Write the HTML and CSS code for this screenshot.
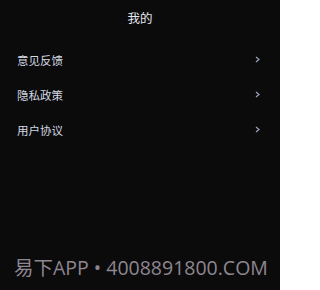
FILE: index.html
```html
<!DOCTYPE html>
<html lang="zh">
<head>
<meta charset="utf-8">
<link rel="stylesheet" href="styles.css">
</head>
<body>
<div class="screen">
  <div class="title">我的</div>
  <div class="menu">
    <div class="item"><span class="label">意见反馈</span><svg class="chev" width="5" height="7" viewBox="0 0 5 7"><path d="M1 1 L4 3.5 L1 6" fill="none" stroke="#9aa4b8" stroke-width="1.2"/></svg></div>
    <div class="item"><span class="label">隐私政策</span><svg class="chev" width="5" height="7" viewBox="0 0 5 7"><path d="M1 1 L4 3.5 L1 6" fill="none" stroke="#9aa4b8" stroke-width="1.2"/></svg></div>
    <div class="item"><span class="label">用户协议</span><svg class="chev" width="5" height="7" viewBox="0 0 5 7"><path d="M1 1 L4 3.5 L1 6" fill="none" stroke="#9aa4b8" stroke-width="1.2"/></svg></div>
  </div>
  <div class="footer">易下APP • 4008891800.COM</div>
</div>
</body>
</html>
```
FILE: styles.css
```css
html, body {
  margin: 0;
  padding: 0;
  background: #ffffff;
}
.screen {
  width: 280px;
  height: 290px;
  background: #0b0b0c;
  display: flex;
  flex-direction: column;
  font-family: "Noto Sans CJK SC", "Noto Sans", sans-serif;
  color: #e6e8ee;
}
.title {
  text-align: center;
  font-size: 12.5px;
  line-height: 20px;
  padding-top: 8px;
}
.menu {
  display: flex;
  flex-direction: column;
  padding-top: 14px;
  flex: 1;
}
.item {
  height: 35px;
  display: flex;
  align-items: center;
  justify-content: space-between;
  padding: 0 20px 0 17px;
  font-size: 11.5px;
  color: #d4d8e2;
}
.chev {
  display: block;
}
.footer {
  font-family: "Open Sans", "Noto Sans CJK SC", sans-serif;
  font-size: 19.5px;
  line-height: 26px;
  color: #8e8690;
  padding: 0 0 9px 14px;
  white-space: nowrap;
}
```
